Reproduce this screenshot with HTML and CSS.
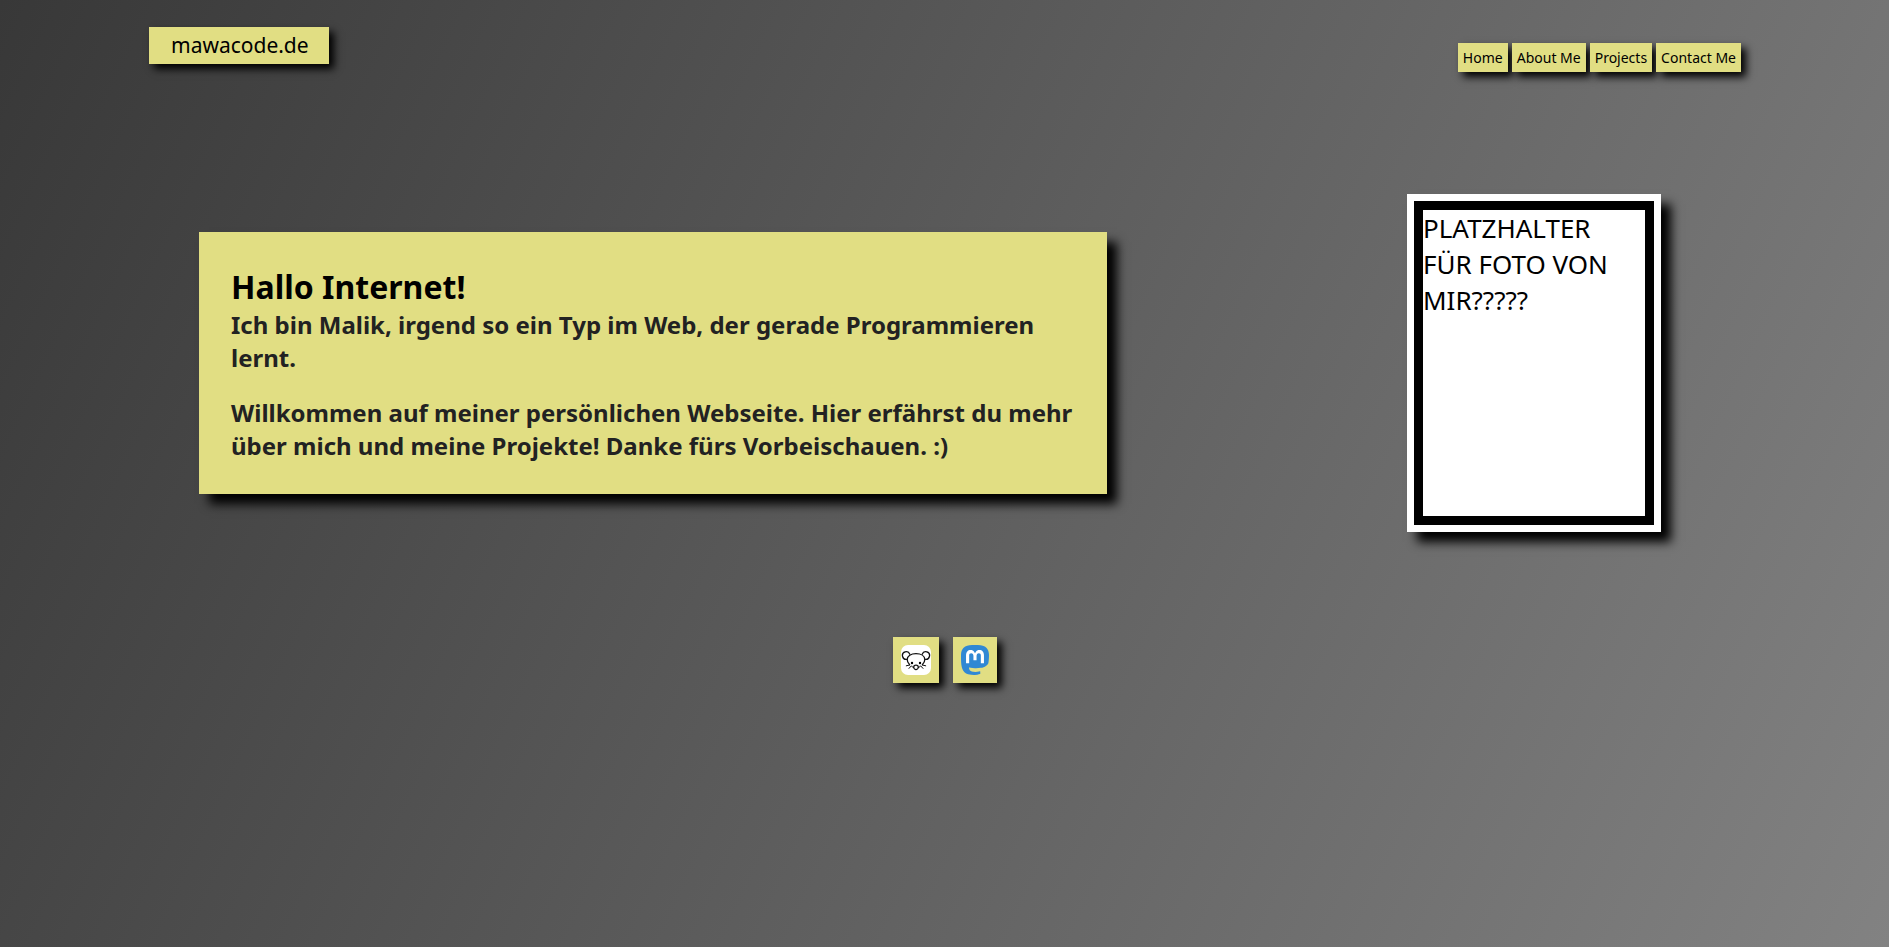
FILE: index.html
```html
<!DOCTYPE html>
<html lang="de">
<head>
<meta charset="utf-8">
<meta name="viewport" content="width=device-width, initial-scale=1">
<title>mawacode.de</title>
<link rel="stylesheet" href="styles.css">
</head>
<body>
<header class="site-header">
  <a class="logo" href="#">mawacode.de</a>
  <nav class="nav">
    <a class="nav-link" href="#">Home</a>
    <a class="nav-link" href="#about">About Me</a>
    <a class="nav-link" href="#projects">Projects</a>
    <a class="nav-link" href="#contact">Contact Me</a>
  </nav>
</header>
<main class="hero">
  <section class="intro">
    <h1 class="intro-title">Hallo Internet!</h1>
    <p class="intro-text">Ich bin Malik, irgend so ein Typ im Web, der gerade Programmieren lernt.</p>
    <p class="intro-text">Willkommen auf meiner persönlichen Webseite. Hier erfährst du mehr über mich und meine Projekte! Danke fürs Vorbeischauen. :)</p>
  </section>
  <div class="photo"><div class="photo-frame">PLATZHALTER FÜR FOTO VON MIR?????</div></div>
</main>
<footer class="social">
  <a class="social-link" href="#lemmy" aria-label="Lemmy">
    <svg width="30" height="30" viewBox="0 0 30 30" fill="none" stroke="#111" stroke-width="1.300" stroke-linecap="round">
      <rect width="30" height="30" rx="7" fill="#fff" stroke="none"/>
      <path d="M6 14.300A3.800 3.800 0 1 1 8.800 9.200M24 14.300A3.800 3.800 0 1 0 21.200 9.200"/>
      <path d="M8.500 19.500C7 18 6.200 16.300 6.200 14.600C6.200 10.800 10 8.700 15 8.700S23.800 10.800 23.800 14.600C23.800 16.300 23 18 21.500 19.500"/>
      <path d="M15 20.200C13.400 20.200 12.700 21.500 12.700 22.300C12.700 23.500 14 24.600 15 24.600S17.300 23.500 17.300 22.300C17.300 21.500 16.600 20.200 15 20.200Z"/>
      <path stroke-width="1" d="M8.800 20L5.300 20.800M10.200 21L8 23.400M12.500 22.500L10.800 21.500M21.200 20L24.700 20.800M19.800 21L22 23.400M17.500 22.500L19.200 21.500"/>
      <circle cx="11" cy="18" r="1.200" fill="#000" stroke="none"/><circle cx="19" cy="18" r="1.200" fill="#000" stroke="none"/>
    </svg>
  </a>
  <a class="social-link" href="#mastodon" aria-label="Mastodon">
    <svg width="28" height="30" viewBox="0 0 216.415 232.010">
      <path fill="#3088d4" d="M211.807 139.088c-3.180 16.366-28.492 34.277-57.562 37.748-15.159 1.809-30.084 3.471-45.999 2.741-26.028-1.192-46.565-6.212-46.565-6.212 0 2.534.156 4.946.469 7.202 3.384 25.687 25.470 27.225 46.392 27.943 21.116.723 39.919-5.206 39.919-5.206l.867 19.090s-14.770 7.931-41.081 9.390c-14.509.797-32.524-.365-53.506-5.919C9.232 213.820 1.406 165.311.209 116.091c-.365-14.613-.14-28.393-.14-39.918 0-50.330 32.976-65.082 32.976-65.082C49.672 3.454 78.204.242 107.865 0h.729c29.661.242 58.211 3.454 74.838 11.091 0 0 32.975 14.752 32.975 65.082 0 0 .414 37.134-4.600 62.915"/>
      <path fill="#fff" d="M177.510 80.077v60.941h-24.144v-59.150c0-12.469-5.246-18.797-15.740-18.797-11.602 0-17.417 7.507-17.417 22.352v32.376H96.207V85.423c0-14.845-5.816-22.352-17.418-22.352-10.494 0-15.740 6.328-15.740 18.797v59.150H38.905V80.077c0-12.455 3.171-22.352 9.541-29.675 6.569-7.322 15.171-11.076 25.850-11.076 12.355 0 21.711 4.749 27.898 14.248l6.014 10.081 6.015-10.081c6.185-9.499 15.541-14.248 27.898-14.248 10.678 0 19.280 3.754 25.850 11.076 6.369 7.323 9.540 17.220 9.540 29.675"/>
    </svg>
  </a>
</footer>
</body>
</html>
```
FILE: styles.css
```css
* { box-sizing: border-box; margin: 0; }

body {
  min-height: 100vh;
  background: linear-gradient(115deg, #383838, #828282);
  font-family: "Noto Sans", sans-serif;
  color: #000;
}

a { color: #000; text-decoration: none; }

.site-header {
  display: flex;
  justify-content: space-between;
  align-items: flex-start;
  padding: 27px 148px 0 149px;
}

.logo {
  padding: 4px 20px 4px 22px;
  background: #e1de83;
  box-shadow: 5px 5px 8px #000;
  font-size: 21px;
  line-height: 29px;
}

.nav { display: flex; gap: 4px; padding-top: 16px; }

.nav-link {
  padding: 5px;
  background: #e1de83;
  box-shadow: 5px 5px 8px #000;
  font-size: 14px;
  line-height: 19px;
}

.hero {
  display: flex;
  justify-content: space-between;
  align-items: center;
  padding: 122px 228px 0 199px;
}

.intro {
  flex: 0 1 908px;
  padding: 34px 32px 32px;
  background: #e1de83;
  box-shadow: 10px 10px 10px #000;
}

.intro-title { font-size: 32px; line-height: 42px; }

.intro-text {
  color: #222;
  font-size: 24px;
  font-weight: 700;
  line-height: 33px;
}

.intro-text + .intro-text { margin-top: 22px; }

.photo {
  flex: none;
  padding: 7px;
  background: #fff;
  box-shadow: 10px 10px 10px #000;
}

.photo-frame {
  width: 240px;
  height: 324px;
  border: 9px solid #000;
  font-size: 26px;
  line-height: 36px;
}

.social {
  display: flex;
  justify-content: center;
  gap: 14px;
  padding-top: 105px;
}

.social-link {
  display: flex;
  padding: 8px;
  background: #e1de83;
  box-shadow: 5px 5px 8px #000;
}
```
